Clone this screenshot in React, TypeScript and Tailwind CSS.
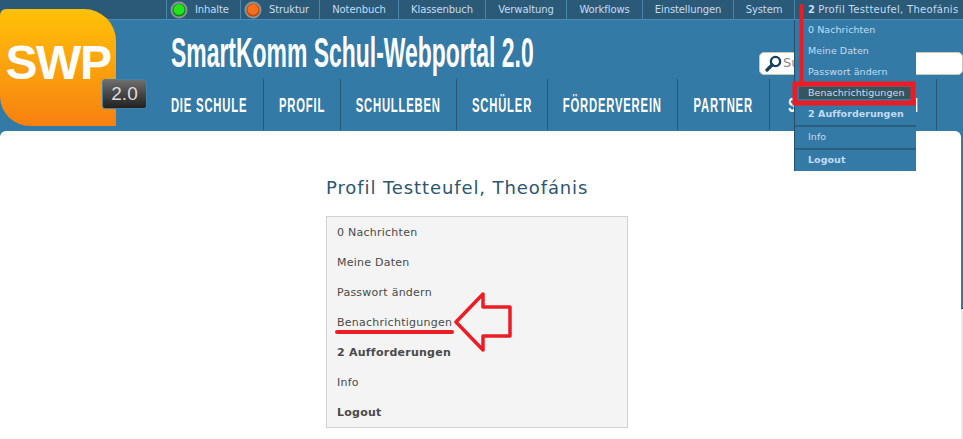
const topItems = [
  { label: 'Inhalte', w: 'w-[74px]', led: 'green' },
  { label: 'Struktur', w: 'w-[79px]', led: 'orange' },
  { label: 'Notenbuch', w: 'w-[79px]' },
  { label: 'Klassenbuch', w: 'w-[87px]' },
  { label: 'Verwaltung', w: 'w-[81px]' },
  { label: 'Workflows', w: 'w-[76px]' },
  { label: 'Einstellungen', w: 'w-[91px]' },
  { label: 'System', w: 'w-[61px]' },
];

const mainItems = [
  { label: 'DIE SCHULE', w: 'w-[108px]' },
  { label: 'PROFIL', w: 'w-[77px]' },
  { label: 'SCHULLEBEN', w: 'w-[116px]' },
  { label: 'SCHÜLER', w: 'w-[91px]' },
  { label: 'FÖRDERVEREIN', w: 'w-[130px]' },
  { label: 'PARTNER', w: 'w-[92px]' },
  { label: 'SCHULINFORMATION', w: 'w-[167px]' },
];

const sideMenu = ['0 Nachrichten', 'Meine Daten', 'Passwort ändern', 'Benachrichtigungen', '2 Aufforderungen', 'Info', 'Logout'];

function Led({ color }: { color: string }) {
  const inner = color === 'green' ? '#22e31c' : '#f4701c';
  const dark = color === 'green' ? '#0c8a10' : '#c4450c';
  return (
    <svg width="18" height="18" viewBox="0 0 18 18" className="mr-[7px] shrink-0">
      <circle cx="9" cy="9" r="8.5" fill="#8a9699" />
      <circle cx="9" cy="9" r="6.6" fill={dark} />
      <circle cx="9" cy="8.4" r="5.4" fill={inner} />
    </svg>
  );
}

function Dropdown() {
  const row = 'h-[21px] flex items-center pb-[1px] pl-[13px] text-[9.5px] tracking-[0.05px] text-[#c4dcf5] whitespace-nowrap';
  return (
    <div className="absolute left-[794px] top-[20px] w-[122px] h-[151px] bg-[#337aa6] border-l border-[#24506c]">
      <div className={row}>0 Nachrichten</div>
      <div className={row}>Meine Daten</div>
      <div className={row}>Passwort ändern</div>
      <div className={row}>
        <span className="-ml-[9px] pl-[9px] w-[113px] h-[12px] flex items-center bg-[#37565c]">Benachrichtigungen</span>
      </div>
      <div className={`${row} font-bold`}>2 Aufforderungen</div>
      <div className={`${row} h-[23px] border-t-2 border-[#2a5f80]`}>Info</div>
      <div className={`${row} h-[23px] border-t-2 border-[#2a5f80] font-bold`}>Logout</div>
    </div>
  );
}

function Annotations() {
  return (
    <svg width="963" height="439" viewBox="0 0 963 439" className="absolute left-0 top-0 pointer-events-none">
      <path d="M801.5 6V84" stroke="#ed1c24" strokeWidth="4" strokeLinecap="round" fill="none" />
      <rect x="795" y="84" width="118" height="19" stroke="#ed1c24" strokeWidth="5" fill="none" />
      <path d="M337 332H452" stroke="#ed1c24" strokeWidth="4" strokeLinecap="round" fill="none" />
      <path d="M456 322L483 294V307H510V336H483V350Z" stroke="#ed1c24" strokeWidth="3.5" strokeLinejoin="round" fill="none" />
    </svg>
  );
}

export default function App() {
  return (
    <div className="relative flex flex-col w-[963px] h-[439px] overflow-hidden bg-[#337aa6] font-['DejaVu_Sans',sans-serif]">
      <div className="flex h-[20px] shrink-0 pl-[166px] bg-[#2a5a78] border-b border-[#4a8cb4]">
        {topItems.map((t) => (
          <div key={t.label} className={`${t.w} flex items-center ${t.led ? 'pl-[3px]' : 'justify-center'} border-l border-[#4a87ab] text-[10px] tracking-[-0.1px] text-[#c4dcf5]`}>
            {t.led && <Led color={t.led} />}
            {t.label}
          </div>
        ))}
        <div className="flex-1 flex items-center pl-[13px] border-l border-[#4a87ab] text-[10px] tracking-[0.3px] text-[#c4dcf5]">
          <span className="font-bold mr-[3px]">2</span>Profil Testteufel, Theofánis
        </div>
      </div>

      <div className="h-[111px] shrink-0 flex flex-col">
        <div className="h-[59px] pl-[171px] flex items-center justify-between">
          <div className="w-[363px] mt-[7px] flex">
            <span className="inline-block origin-left scale-x-[0.546] whitespace-nowrap text-[42px] leading-none font-bold text-white font-['Liberation_Sans',sans-serif]">
              SmartKomm Schul-Webportal 2.0
            </span>
          </div>
          <div className="mt-[27px] w-[204px] h-[23px] bg-white rounded-[5px] border border-[#c8c8b8] flex items-center pl-[5px] text-[13px] text-[#888]">
            <svg width="17" height="17" viewBox="0 0 17 17" className="mr-[1px]">
              <circle cx="10.5" cy="6.5" r="4.6" fill="none" stroke="#16405c" strokeWidth="2.4" />
              <path d="M7 10L2 15" stroke="#16405c" strokeWidth="3.2" strokeLinecap="round" />
            </svg>
            Suche
          </div>
        </div>
        <div className="flex h-[51px] pl-[156px]">
          {mainItems.map((m) => (
            <div key={m.label} className={`${m.w} flex items-center justify-center border-r border-[#24597a]`}>
              <span className="inline-block shrink-0 scale-x-[0.537] whitespace-nowrap text-[21px] leading-none font-bold tracking-[1.5px] text-white font-['Liberation_Sans',sans-serif]">
                {m.label}
              </span>
            </div>
          ))}
        </div>
      </div>

      <div className="flex-1 flex">
        <div className="w-[961px] bg-white rounded-t-[6px] flex flex-col items-center pr-[7px]">
          <h1 className="mt-[46px] w-[302px] text-[18px] leading-[22px] tracking-[0.9px] text-[#2d5670]">Profil Testteufel, Theofánis</h1>
          <div className="mt-[17px] w-[302px] h-[212px] bg-[#f4f4f4] border border-[#d2d2d2] pt-[1px]">
            {sideMenu.map((s) => (
              <div key={s} className={`h-[30px] flex items-center pl-[10px] text-[11px] tracking-[0.25px] text-[#4a4a4a] ${s === '2 Aufforderungen' || s === 'Logout' ? 'font-bold' : ''}`}>
                {s}
              </div>
            ))}
          </div>
        </div>
        {/* strip at the right edge: blue, then grey further down */}
        <div className="flex-1 mt-[177px] bg-[#e8e8e4] border-t border-[#1f4a66]" />
      </div>

      <div className="absolute left-0 top-[9px] w-[116px] h-[117px] bg-gradient-to-b from-[#ffc107] to-[#f7800f] rounded-tl-[6px] rounded-tr-[32px] rounded-bl-[30px] flex items-center justify-center pb-[10px] text-[48px] leading-none font-bold text-white tracking-[-1.5px] font-['Liberation_Sans',sans-serif]">
        SWP
      </div>
      <div className="absolute left-[102px] top-[79px] w-[45px] h-[30px] rounded-[3px] border border-[#3f82aa] bg-gradient-to-b from-[#6e6e6e] to-[#222] flex items-center justify-center text-[19px] text-[#ddd] font-['Liberation_Sans',sans-serif]">
        2.0
      </div>

      <Dropdown />
      <Annotations />
    </div>
  );
}
